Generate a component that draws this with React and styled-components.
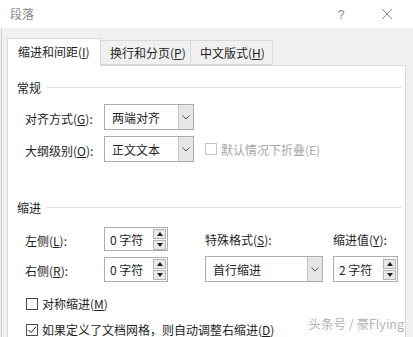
import React from 'react'
import styled, { createGlobalStyle } from 'styled-components'

const Global = createGlobalStyle`
  html, body {
    margin: 0;
    padding: 0;
    background: #f0f0f0;
  }
  body {
    font-family: "Noto Sans CJK SC", "Microsoft YaHei", sans-serif;
    font-size: 12px;
    color: #1e1e1e;
  }
`

const Window = styled.div`
  position: relative;
  width: 413px;
  height: 337px;
  overflow: hidden;
  background: #f0f0f0;
`

const TitleBar = styled.div`
  height: 28px;
  background: #fff;
  display: flex;
  align-items: center;
  padding-left: 10px;
  color: #8a8a8a;
  font-size: 12px;
`

const Title = styled.div`
  flex: 1;
  line-height: 16px;
`

const TitleButton = styled.div`
  width: ${({ w }) => w}px;
  display: flex;
  justify-content: center;
  align-items: center;
  color: #8c8c8c;
  font-family: "Liberation Sans", sans-serif;
  font-size: 13px;
`

const Body = styled.div`
  height: 309px;
  border-left: 1px solid #cfcfcf;
  margin-left: 1px;
  box-sizing: border-box;
`

const TabBar = styled.div`
  display: flex;
  align-items: flex-end;
  margin-left: 5px;
  padding-top: 10px;
  height: 27px;
`

const Tab = styled.div`
  position: relative;
  z-index: ${({ active }) => (active ? 2 : 1)};
  box-sizing: border-box;
  width: ${({ w }) => w}px;
  height: ${({ active }) => (active ? 28 : 25)}px;
  margin-bottom: ${({ active }) => (active ? -1 : 0)}px;
  background: ${({ active }) => (active ? '#fff' : '#f0f0f0')};
  border: 1px solid #d9d9d9;
  border-bottom: ${({ active }) => (active ? 'none' : '1px solid #d9d9d9')};
  border-left: ${({ first }) => (first ? '1px solid #d9d9d9' : 'none')};
  display: flex;
  align-items: center;
  padding-left: ${({ active }) => (active ? 10 : 9)}px;
  padding-bottom: ${({ active }) => (active ? 2 : 0)}px;
  white-space: nowrap;
`

const Panel = styled.div`
  position: relative;
  z-index: 1;
  margin-left: 5px;
  width: 399px;
  height: 290px;
  box-sizing: border-box;
  background: #fff;
  border: 1px solid #d9d9d9;
  padding: 13px 0 0 9px;
`

const GroupHeader = styled.div`
  display: flex;
  align-items: center;
  gap: 6px;
  height: 16px;
  margin-top: ${({ top }) => top}px;
  color: #1e1e1e;

  &::after {
    content: '';
    flex: 1;
    height: 1px;
    background: #dcdcdc;
    margin-right: 4px;
  }
`

const GeneralGrid = styled.div`
  display: grid;
  grid-template-columns: 79px 90px auto;
  grid-auto-rows: 26px;
  row-gap: 6px;
  margin: 9px 0 0 8px;
  align-items: center;
`

const IndentGrid = styled.div`
  display: grid;
  grid-template-columns: 79px 64px 155px 75px;
  grid-template-rows: 24px 26px;
  row-gap: 5px;
  margin: 12px 0 0 8px;
  align-items: center;
`

const Label = styled.div`
  white-space: nowrap;
  margin-left: ${({ ml }) => ml || 0}px;
  padding-top: ${({ pt }) => pt || 0}px;
`

const SelectBox = styled.div`
  box-sizing: border-box;
  height: 26px;
  width: ${({ w }) => w}px;
  justify-self: end;
  border: 1px solid #adadad;
  display: flex;
  background: #fff;
`

const SelectText = styled.div`
  flex: 1;
  display: flex;
  align-items: center;
  padding-left: 7px;
  white-space: nowrap;
`

const SelectButton = styled.div`
  width: 14px;
  background: #e6e6e6;
  border-left: 1px solid #c6c6c6;
  display: flex;
  align-items: center;
  justify-content: center;
`

const Spin = styled.div`
  box-sizing: border-box;
  height: ${({ h }) => h}px;
  width: ${({ w }) => w}px;
  justify-self: end;
  border: 1px solid #adadad;
  display: flex;
  align-items: center;
  padding: 0 1px 0 5px;
  background: #fff;
`

const SpinText = styled.div`
  flex: 1;
  white-space: nowrap;
`

const SpinButtons = styled.div`
  display: flex;
  flex-direction: column;
  gap: 1px;
`

const SpinButton = styled.div`
  box-sizing: border-box;
  width: 13px;
  height: 10px;
  background: #e8e8e8;
  border: 1px solid #b5b5b5;
  display: flex;
  align-items: center;
  justify-content: center;
`

const CheckRow = styled.div`
  display: flex;
  align-items: center;
  gap: 4px;
  white-space: nowrap;
  color: ${({ disabled }) => (disabled ? '#a8a8a8' : '#1e1e1e')};
  margin-left: ${({ ml }) => ml || 0}px;
  margin-top: ${({ mt }) => mt || 0}px;
`

const Box = styled.div`
  box-sizing: border-box;
  width: 12px;
  height: 12px;
  border: 1px solid ${({ disabled }) => (disabled ? '#c4c4c4' : '#4d4d4d')};
  background: #fff;
  display: flex;
  align-items: center;
  justify-content: center;
`

const Watermark = styled.div`
  position: absolute;
  z-index: 5;
  right: 9px;
  bottom: 4px;
  color: rgba(150, 150, 150, 0.75);
  font-size: 12.5px;
  white-space: nowrap;
`

const Chevron = () => (
  <svg width="8" height="5" viewBox="0 0 8 5">
    <path d="M0.5 0.5 L4 4 L7.5 0.5" fill="none" stroke="#555" strokeWidth="1" />
  </svg>
)

const Tri = ({ down }) => (
  <svg width="6" height="4" viewBox="0 0 6 4">
    <path d={down ? 'M0 0 H6 L3 4 Z' : 'M0 4 H6 L3 0 Z'} fill="#1e1e1e" />
  </svg>
)

const Select = ({ value, w }) => (
  <SelectBox w={w}>
    <SelectText>{value}</SelectText>
    <SelectButton><Chevron /></SelectButton>
  </SelectBox>
)

const Spinner = ({ value, w, h }) => (
  <Spin w={w} h={h}>
    <SpinText>{value}</SpinText>
    <SpinButtons>
      <SpinButton><Tri /></SpinButton>
      <SpinButton><Tri down /></SpinButton>
    </SpinButtons>
  </Spin>
)

const Check = ({ checked, disabled, children, ml, mt }) => (
  <CheckRow disabled={disabled} ml={ml} mt={mt}>
    <Box disabled={disabled}>
      {checked && (
        <svg width="10" height="10" viewBox="0 0 10 10">
          <path d="M1.5 5 L4 7.5 L8.8 2" fill="none" stroke="#222" strokeWidth="1" />
        </svg>
      )}
    </Box>
    <span>{children}</span>
  </CheckRow>
)

export default function App() {
  return (
    <Window>
      <Global />
      <TitleBar>
        <Title>段落</Title>
        <TitleButton w={40}>?</TitleButton>
        <TitleButton w={52}>
          <svg width="12" height="12" viewBox="0 0 12 12">
            <path d="M1 1 L11 11 M11 1 L1 11" stroke="#8c8c8c" strokeWidth="1" />
          </svg>
        </TitleButton>
      </TitleBar>
      <Body>
        <TabBar>
          <Tab active first w={94}>缩进和间距(<u>I</u>)</Tab>
          <Tab w={90}>换行和分页(<u>P</u>)</Tab>
          <Tab w={82}>中文版式(<u>H</u>)</Tab>
        </TabBar>
        <Panel>
          <GroupHeader top={0}>常规</GroupHeader>
          <GeneralGrid>
            <Label pt={2}>对齐方式(<u>G</u>):</Label>
            <Select value="两端对齐" w={90} />
            <div />
            <Label pt={2}>大纲级别(<u>O</u>):</Label>
            <Select value="正文文本" w={90} />
            <Check disabled ml={11}>默认情况下折叠(E)</Check>
          </GeneralGrid>

          <GroupHeader top={37}>缩进</GroupHeader>
          <IndentGrid>
            <Label pt={2}>左侧(<u>L</u>):</Label>
            <Spinner value="0 字符" w={64} h={24} />
            <Label ml={37}>特殊格式(<u>S</u>):</Label>
            <Label ml={10}>缩进值(<u>Y</u>):</Label>
            <Label pt={2}>右侧(<u>R</u>):</Label>
            <Spinner value="0 字符" w={64} h={25} />
            <Select value="首行缩进" w={118} />
            <Spinner value="2 字符" w={65} h={26} />
          </IndentGrid>

          <Check ml={9} mt={13}>对称缩进(<u>M</u>)</Check>
          <Check checked ml={9} mt={9}>如果定义了文档网格，则自动调整右缩进(<u>D</u>)</Check>
        </Panel>
      </Body>
      <Watermark>头条号 / 豪Flying</Watermark>
    </Window>
  )
}
